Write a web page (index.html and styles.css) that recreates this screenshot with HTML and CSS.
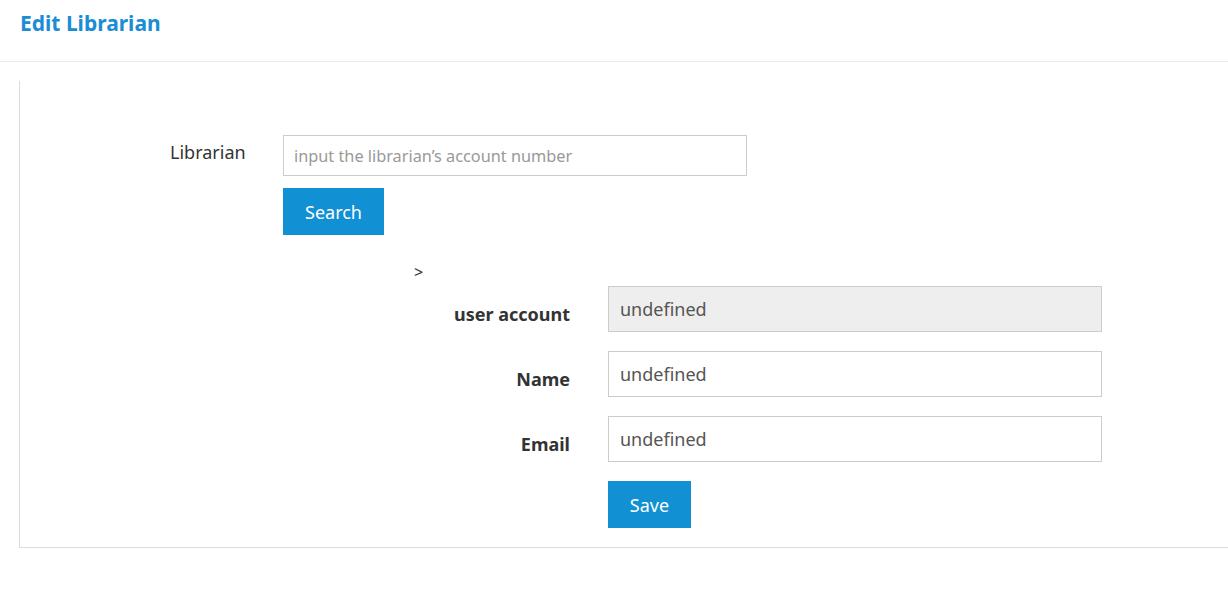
FILE: index.html
```html
<!DOCTYPE html>
<html lang="en">
<head>
<meta charset="utf-8">
<title>Edit Librarian</title>
<link rel="stylesheet" href="styles.css">
</head>
<body>
<header class="header">
  <h1 class="title">Edit Librarian</h1>
</header>
<main class="panel">
  <form class="search-form">
    <label class="search-label" for="acct">Librarian</label>
    <div class="search-controls">
      <input id="acct" class="search-input" type="text" placeholder="input the librarian’s account number">
      <button type="button" class="btn btn-search">Search</button>
    </div>
  </form>
  <div class="result">
    <div class="arrow">&gt;</div>
    <div class="field">
      <label class="field-label">user account</label>
      <input class="field-input readonly" type="text" value="undefined" readonly>
    </div>
    <div class="field">
      <label class="field-label">Name</label>
      <input class="field-input" type="text" value="undefined">
    </div>
    <div class="field">
      <label class="field-label">Email</label>
      <input class="field-input" type="text" value="undefined">
    </div>
    <div class="field">
      <span class="field-label"></span>
      <button type="button" class="btn btn-save">Save</button>
    </div>
  </div>
</main>
</body>
</html>
```

FILE: styles.css
```css
html, body {
  margin: 0;
  padding: 0;
  background: #fff;
  overflow: hidden;
}
body {
  font-family: "Noto Sans", "Open Sans", sans-serif;
  color: #333;
}
.header {
  height: 62px;
  border-bottom: 1px solid #eaeaea;
  box-sizing: border-box;
  padding: 8px 0 0 20px;
}
.title {
  margin: 0;
  font-size: 21px;
  line-height: 30px;
  font-weight: 700;
  color: #1a8dd4;
}
.panel {
  margin: 19px -40px 0 19px;
  height: 467px;
  box-sizing: border-box;
  border-left: 1px solid #dcdcdc;
  border-bottom: 1px solid #dcdcdc;
  padding-top: 54px;
}
.search-form {
  display: flex;
  padding-left: 150px;
}
.search-label {
  width: 113px;
  font-size: 18px;
  line-height: 24px;
  padding-top: 5px;
  color: #333;
}
.search-controls {
  display: flex;
  flex-direction: column;
  align-items: flex-start;
  gap: 12px;
}
.search-input {
  width: 464px;
  height: 41px;
  box-sizing: border-box;
  border: 1px solid #ccc;
  padding: 0 10px;
  font-family: inherit;
  font-size: 16.3px;
  color: #333;
  outline: none;
}
.search-input::placeholder {
  color: #999;
}
.btn {
  height: 47px;
  border: none;
  border-radius: 0;
  background: #1190d4;
  color: #fff;
  font-family: inherit;
  font-size: 18px;
  padding: 0;
  cursor: pointer;
}
.btn-search {
  width: 101px;
}
.btn-save {
  width: 83px;
}
.result {
  margin-top: 24px;
  display: flex;
  flex-direction: column;
  gap: 19px;
}
.arrow {
  padding-left: 394px;
  font-size: 16px;
  line-height: 20px;
  height: 12px;
  margin-top: 3px;
  margin-bottom: -7px;
  color: #333;
}
.field {
  display: flex;
  align-items: center;
  gap: 38px;
}
.field-label {
  width: 550px;
  text-align: right;
  font-weight: 700;
  font-size: 18px;
  padding-top: 10px;
  color: #333;
}
.field-input {
  width: 494px;
  height: 46px;
  box-sizing: border-box;
  border: 1px solid #ccc;
  padding: 0 11px;
  font-family: inherit;
  font-size: 18px;
  color: #555;
  background: #fff;
  outline: none;
}
.field-input.readonly {
  background: #eee;
}
```
